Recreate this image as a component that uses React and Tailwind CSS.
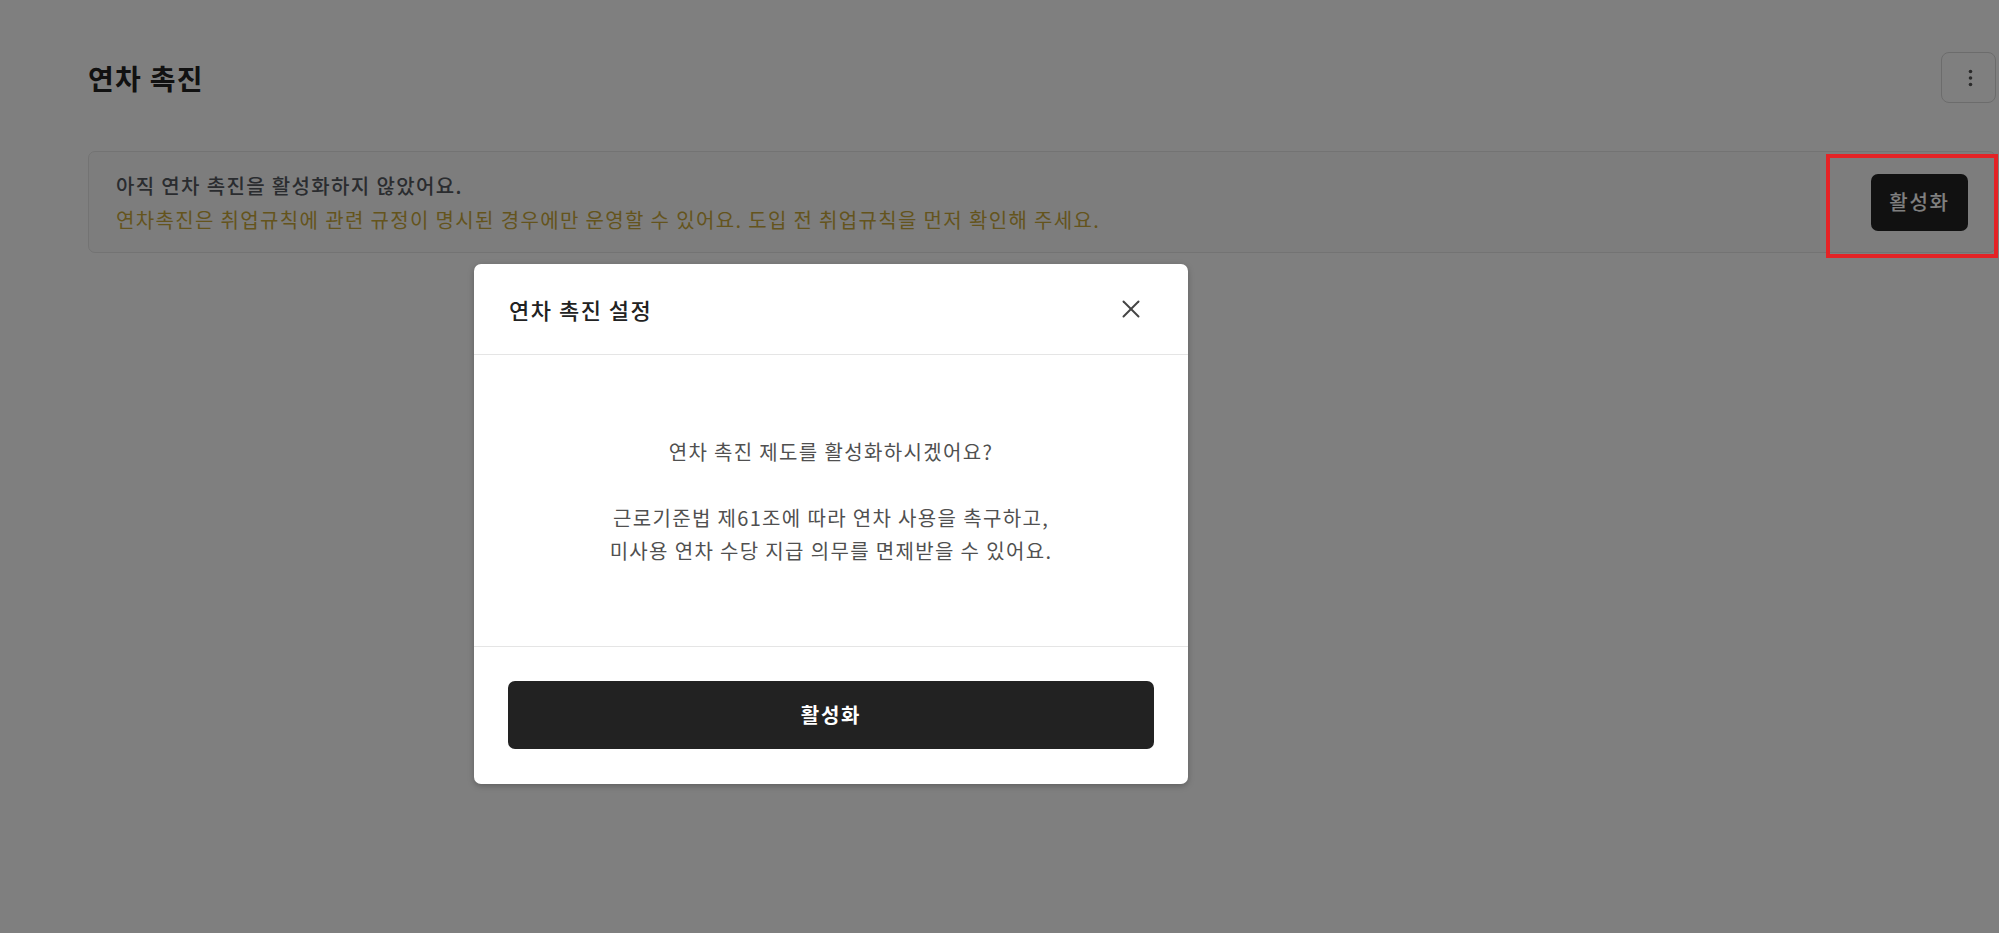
import React from "react";

const font = { fontFamily: '"Noto Sans CJK KR", "Noto Sans", sans-serif' };

export default function App() {
  return (
    <div
      className="relative w-full h-[933px] bg-white overflow-hidden"
      style={font}
    >
      {/* Page */}
      <div className="pl-[88px] pr-[3px] pt-[52px]">
        <div className="flex items-center justify-between h-[51px]">
          <h1 className="text-[28px] font-bold text-[#222] leading-none tracking-[1.3px]">
            연차 촉진
          </h1>
          <button className="w-[55px] h-[51px] rounded-[8px] border border-[#d8d8d8] flex items-center justify-center">
            <svg width="20" height="20" viewBox="0 0 20 20" fill="#555">
              <circle cx="11.5" cy="3.5" r="1.8" />
              <circle cx="11.5" cy="10" r="1.8" />
              <circle cx="11.5" cy="16.5" r="1.8" />
            </svg>
          </button>
        </div>

        <div className="mt-[48px] h-[102px] rounded-[7px] border border-[#e6e6e6] bg-[#fbfbfb] pl-[27px] pr-[27px] flex items-center justify-between">
          <div className="leading-[34px] text-[20px] tracking-[1.35px] pt-[2px]">
            <p className="font-medium text-[#55595f]">
              아직 연차 촉진을 활성화하지 않았어요.
            </p>
            <p className="text-[#c9a83a]">
              연차촉진은 취업규칙에 관련 규정이 명시된 경우에만 운영할 수 있어요. 도입 전 취업규칙을 먼저 확인해 주세요.
            </p>
          </div>
          <button className="h-[57px] w-[97px] rounded-[7px] bg-[#222] text-white text-[20px] font-medium tracking-[1.8px]">
            활성화
          </button>
        </div>
      </div>

      {/* Dim overlay */}
      <div className="absolute inset-0 bg-[rgba(0,0,0,0.5)]" />

      {/* Annotation */}
      <div className="absolute left-[1826px] top-[154px] w-[172px] h-[104px] border-[4px] border-[#e42326]" />

      {/* Modal */}
      <div className="absolute left-[474px] top-[264px] w-[714px] bg-white rounded-[7px] shadow-[0_2px_6px_rgba(0,0,0,0.25)] overflow-hidden">
        <div className="h-[91px] border-b border-[#e5e5e5] flex items-center justify-between pl-[35px] pr-[48px]">
          <h2 className="text-[22px] font-medium text-[#222] leading-none tracking-[1.5px]">
            연차 촉진 설정
          </h2>
          <svg width="18" height="18" viewBox="0 0 18 18" stroke="#444" strokeWidth="2" strokeLinecap="round">
            <line x1="1.5" y1="1.5" x2="16.5" y2="16.5" />
            <line x1="16.5" y1="1.5" x2="1.5" y2="16.5" />
          </svg>
        </div>
        <div className="h-[292px] border-b border-[#e5e5e5] flex flex-col items-center justify-center text-center text-[20px] leading-[33px] tracking-[1.35px] text-[#505050]">
          <p>연차 촉진 제도를 활성화하시겠어요?</p>
          <p>&nbsp;</p>
          <p>근로기준법 제61조에 따라 연차 사용을 촉구하고,</p>
          <p>미사용 연차 수당 지급 의무를 면제받을 수 있어요.</p>
        </div>
        <div className="px-[34px] pt-[34px] pb-[35px]">
          <button className="w-full h-[68px] rounded-[7px] bg-[#222] text-white text-[20px] font-bold tracking-[1.7px]">
            활성화
          </button>
        </div>
      </div>
    </div>
  );
}
